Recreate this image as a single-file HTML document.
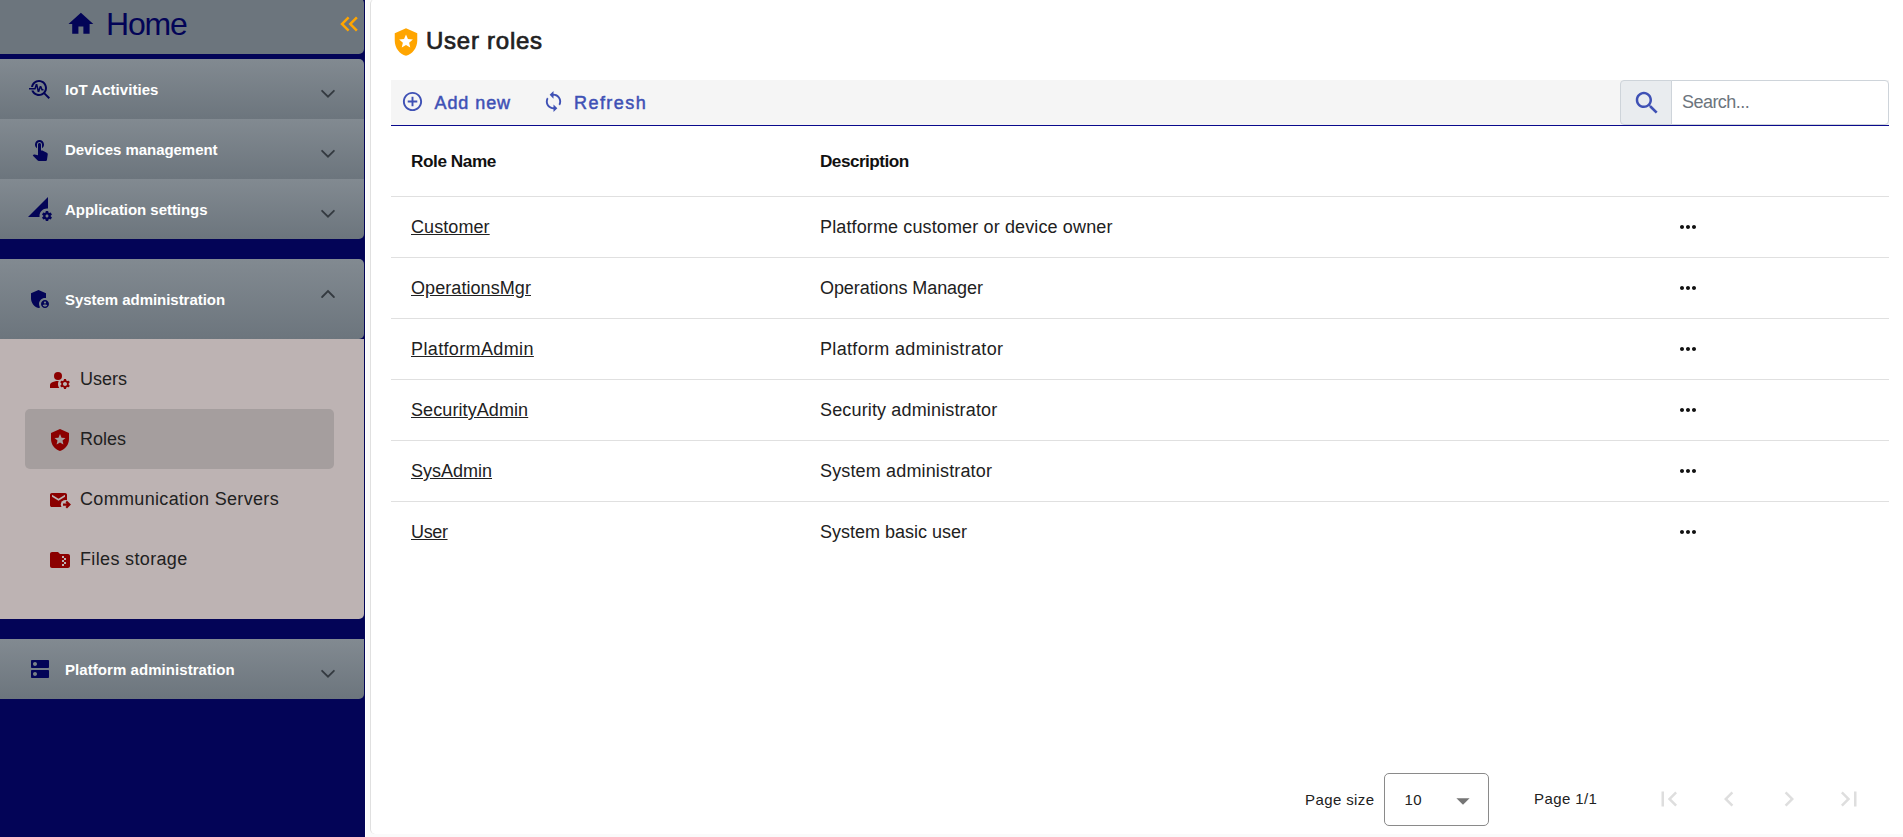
<!DOCTYPE html>
<html>
<head>
<meta charset="utf-8">
<title>User roles</title>
<style>
*{box-sizing:border-box;margin:0;padding:0}
html,body{width:1903px;height:837px;overflow:hidden;background:#fafafa;font-family:"Liberation Sans",sans-serif;color:#212121}
.abs{position:absolute}
#side{position:absolute;left:0;top:0;width:365px;height:837px;background:#030457}
.pan{position:absolute;left:0;width:364px;background:linear-gradient(#828a91,#6c757d);border-radius:0 5px 5px 0}
.pan svg.ic{position:absolute;left:28px;width:24px;height:24px;fill:#030457}
.pan .t{position:absolute;left:65px;color:#fff;font-weight:bold;font-size:15px;white-space:nowrap;line-height:20px}
.pan svg.ch{position:absolute;left:316.350px;width:24px;height:24px;fill:none;stroke:#343a40;stroke-width:1.800;stroke-linecap:round;stroke-linejoin:miter}
#home{top:-2px;height:56px;background:#6c757d}
#body{position:absolute;left:0;top:339px;width:364px;height:280px;background:#bdb3b3;border-radius:0 0 5px 0}
.it{position:absolute;left:25px;width:309px;height:60px;border-radius:5px}
.it svg{position:absolute;left:23px;top:19px;width:24px;height:24px;fill:#8b0000}
.it span{position:absolute;left:55px;top:19px;font-size:18px;line-height:22px;white-space:nowrap;color:#212121}
#card{position:absolute;left:370px;top:-1px;width:1533px;height:834.700px;background:#fff;border-left:1px solid #e0e0e0;border-radius:5px 0 0 5px}
.tx{position:absolute;white-space:nowrap}
.row{position:absolute;left:391px;width:1498px;height:1px;background:#e0e0e0}
.lnk{position:absolute;left:411px;font-size:18px;line-height:22px;text-decoration:underline;color:#212121;white-space:nowrap}
.dsc{position:absolute;left:820px;font-size:18px;line-height:22px;color:#212121;white-space:nowrap}
.dots{position:absolute;left:1676px;width:24px;height:24px;fill:#111}
</style>
</head>
<body>
<div id="side">
  <div class="pan" id="home">
    <svg class="abs" style="left:66.200px;top:11.270px;width:29.800px;height:29.800px;fill:#030457" viewBox="0 0 24 24"><path d="M10 20v-6h4v6h5v-8h3L12 3 2 12h3v8z"/></svg>
    <div class="tx" style="left:106px;top:7px;font-size:32px;line-height:38px;letter-spacing:-1.200px;color:#030457">Home</div>
    <svg class="abs" style="left:334.200px;top:11px;width:30px;height:30px;fill:#ffa500" viewBox="0 0 24 24"><path d="M17.59 18 19 16.59 14.42 12 19 7.41 17.59 6l-6 6z"/><path d="M11 18l1.41-1.41L7.83 12l4.58-4.59L11 6l-6 6z"/></svg>
  </div>

  <div class="pan" style="top:59px;height:60px;border-radius:0 5px 0 0">
    <svg class="ic" style="top:18px" viewBox="0 0 24 24"><path d="M22 20.59l-4.69-4.69C18.370 14.550 19 12.850 19 11c0-4.420-3.580-8-8-8-4.080 0-7.440 3.050-7.930 7h2.020C5.570 7.170 8.030 5 11 5c3.310 0 6 2.690 6 6s-2.690 6-6 6c-2.420 0-4.500-1.440-5.450-3.500H3.400C4.450 16.690 7.460 19 11 19c1.850 0 3.550-.63 4.900-1.690L20.590 22 22 20.590z"/><path d="M8.430 9.690 9.650 15h1.640l1.260-3.780.95 2.280h2V12h-1l-1.250-3h-1.540l-1.120 3.370L9.350 7H7.700l-1.250 4H1v1.500h6.550z"/></svg>
    <div class="t" style="top:21px;letter-spacing:.050px">IoT Activities</div>
    <svg class="ch" style="top:23px" viewBox="0 0 24 24"><path d="M6.100 8.800l5.900 5.900 5.900-5.900"/></svg>
  </div>

  <div class="pan" style="top:119px;height:60px;border-radius:0">
    <svg class="ic" style="top:18px" viewBox="0 0 24 24"><path d="M9 11.240V7.500C9 6.120 10.120 5 11.500 5S14 6.120 14 7.500v3.740c1.210-.81 2-2.180 2-3.740C16 5.010 13.990 3 11.500 3S7 5.010 7 7.500c0 1.560.79 2.930 2 3.740zm9.840 4.630l-4.540-2.260c-.17-.07-.35-.11-.54-.11H13v-6c0-.83-.67-1.500-1.500-1.500S10 6.670 10 7.500v10.740l-3.430-.72c-.08-.01-.15-.03-.24-.03-.31 0-.59.13-.79.33l-.79.8 4.940 4.940c.27.27.65.44 1.060.44h6.790c.75 0 1.330-.55 1.440-1.280l.75-5.270c.01-.07.02-.14.02-.2 0-.62-.38-1.160-.91-1.380z"/></svg>
    <div class="t" style="top:21px;letter-spacing:-.050px">Devices management</div>
    <svg class="ch" style="top:23px" viewBox="0 0 24 24"><path d="M6.100 8.800l5.900 5.900 5.900-5.900"/></svg>
  </div>

  <div class="pan" style="top:179px;height:60px;border-radius:0 0 5px 0">
    <svg class="ic" style="top:18px" viewBox="0 0 24 24"><path d="M18.990 11.500c.34 0 .67.03 1 .07L20 0 0 20h11.560c-.04-.33-.07-.66-.07-1 0-4.140 3.360-7.500 7.500-7.500zm3.710 7.990c.02-.16.04-.32.04-.49 0-.17-.01-.33-.04-.49l1.060-.83c.09-.08.12-.21.06-.32l-1-1.730c-.06-.11-.19-.15-.31-.11l-1.240.5c-.26-.2-.54-.37-.85-.49l-.19-1.320c-.01-.12-.12-.21-.24-.21h-2c-.12 0-.23.09-.25.21l-.19 1.320c-.3.13-.59.29-.85.49l-1.240-.5c-.11-.04-.24 0-.31.11l-1 1.730c-.06.11-.04.24.06.32l1.060.83c-.02.16-.03.32-.03.49 0 .17.010.33.030.49l-1.060.83c-.09.08-.12.21-.06.32l1 1.730c.06.11.19.15.31.11l1.240-.5c.26.2.54.37.85.49l.19 1.320c.02.12.12.21.25.21h2c.12 0 .23-.09.25-.21l.19-1.320c.3-.13.59-.29.84-.49l1.250.5c.11.04.24 0 .31-.11l1-1.730c.06-.11.03-.24-.06-.32l-1.070-.83zm-3.710 1.010c-.83 0-1.500-.67-1.500-1.500s.67-1.500 1.500-1.500 1.500.67 1.500 1.500-.67 1.500-1.500 1.500z"/></svg>
    <div class="t" style="top:21px;letter-spacing:-.040px">Application settings</div>
    <svg class="ch" style="top:23px" viewBox="0 0 24 24"><path d="M6.100 8.800l5.900 5.900 5.900-5.900"/></svg>
  </div>

  <div id="body">
    <div class="it" style="top:10px">
      <svg viewBox="0 0 24 24"><circle cx="10" cy="8" r="4"/><path d="M10.670 13.020c-.22-.01-.44-.02-.67-.02-2.420 0-4.680.67-6.610 1.820-.88.52-1.390 1.500-1.390 2.530V20h9.260c-.79-1.130-1.260-2.510-1.260-4 0-1.070.25-2.070.67-2.980z"/><path d="M20.750 16c0-.22-.03-.42-.06-.63l1.140-1.010-1-1.730-1.450.49c-.32-.27-.68-.48-1.080-.63L18 11h-2l-.3 1.490c-.4.15-.76.36-1.080.63l-1.450-.49-1 1.730 1.140 1.010c-.03.21-.06.41-.06.63s.03.42.06.63l-1.140 1.010 1 1.730 1.450-.49c.32.27.68.48 1.080.63L16 21h2l.3-1.490c.4-.15.76-.36 1.080-.63l1.450.49 1-1.730-1.140-1.010c.03-.21.06-.41.06-.63zM17 18c-1.100 0-2-.9-2-2s.9-2 2-2 2 .9 2 2-.9 2-2 2z"/></svg>
      <span>Users</span>
    </div>
    <div class="it" style="top:70px;background:#a59e9e">
      <svg viewBox="0 0 24 24"><path d="M14.500 12.590l.9 3.880-3.400-2.050-3.400 2.050.9-3.870-3-2.590 3.960-.34L12 6.020l1.540 3.640 3.960.34-3 2.590zM3 5v6c0 5.550 3.840 10.740 9 12 5.160-1.260 9-6.450 9-12V5l-9-4-9 4z"/></svg>
      <span>Roles</span>
    </div>
    <div class="it" style="top:130px">
      <svg viewBox="0 0 24 24"><path fill-rule="evenodd" d="M3.870 5h13.260C18.160 5 19 5.840 19 6.870v10.260C19 18.160 18.160 19 17.130 19H3.870C2.840 19 2 18.160 2 17.130V6.870C2 5.840 2.840 5 3.870 5zM10.500 12.800L4 8.800V6.870l6.500 4 6.500-4V8.800l-6.500 4z"/><circle cx="17.500" cy="16.600" r="4.700" fill="#bdb3b3"/><path d="M19 12.800l-1.500 1.500 1.150 1.150H15v2.300h3.650l-1.150 1.150 1.500 1.500 3.950-3.800z"/></svg>
      <span style="letter-spacing:.330px">Communication Servers</span>
    </div>
    <div class="it" style="top:190px">
      <svg viewBox="0 0 24 24"><path d="M20 6h-8l-2-2H4c-1.100 0-2 .9-2 2v12c0 1.100.9 2 2 2h16c1.100 0 2-.9 2-2V8c0-1.100-.9-2-2-2zm-2 6h-2v2h2v2h-2v2h-2v-2h2v-2h-2v-2h2v-2h-2V8h2v2h2v2z"/></svg>
      <span style="letter-spacing:.350px">Files storage</span>
    </div>
  </div>
  <div class="pan" style="top:259px;height:80px;border-radius:0 5px 5px 0">
    <svg class="ic" style="top:28px" viewBox="0 0 24 24"><path d="M17 11c.34 0 .67.04 1 .09V6.270L10.500 3 3 6.270v4.910c0 4.540 3.200 8.790 7.500 9.820.55-.13 1.080-.32 1.600-.55-.69-.98-1.100-2.170-1.100-3.450 0-3.310 2.690-6 6-6z"/><path d="M17 13c-2.210 0-4 1.790-4 4s1.790 4 4 4 4-1.790 4-4-1.790-4-4-4zm0 1.380c.62 0 1.120.51 1.120 1.120s-.51 1.120-1.120 1.120-1.120-.51-1.120-1.120.5-1.120 1.120-1.120zm0 5.370c-.93 0-1.740-.46-2.240-1.170.05-.72 1.510-1.080 2.240-1.080s2.190.36 2.240 1.080c-.5.710-1.310 1.170-2.240 1.170z"/></svg>
    <div class="t" style="top:31px;letter-spacing:-.040px">System administration</div>
    <svg class="ch" style="top:23px" viewBox="0 0 24 24"><path d="M6.100 15l5.900-5.900 5.900 5.900"/></svg>
  </div>

  <div class="pan" style="top:639px;height:60px;border-radius:0 0 5px 0">
    <svg class="ic" style="top:18px" viewBox="0 0 24 24"><path d="M20 13H4c-.55 0-1 .45-1 1v6c0 .55.45 1 1 1h16c.55 0 1-.45 1-1v-6c0-.55-.45-1-1-1zM7 19c-1.100 0-2-.9-2-2s.9-2 2-2 2 .9 2 2-.9 2-2 2zM20 3H4c-.55 0-1 .45-1 1v6c0 .55.45 1 1 1h16c.55 0 1-.45 1-1V4c0-.55-.45-1-1-1zM7 9c-1.100 0-2-.9-2-2s.9-2 2-2 2 .9 2 2-.9 2-2 2z"/></svg>
    <div class="t" style="top:21px;letter-spacing:.060px">Platform administration</div>
    <svg class="ch" style="top:23px" viewBox="0 0 24 24"><path d="M6.100 8.800l5.900 5.900 5.900-5.900"/></svg>
  </div>
</div>

<div class="abs" style="left:365px;top:0;width:1px;height:837px;background:#fff"></div>
<div id="card"></div>

<!-- title -->
<svg class="abs" style="left:390.700px;top:27px;width:30px;height:30px;fill:#ffa500" viewBox="0 0 24 24"><path d="M14.500 12.590l.9 3.880-3.400-2.050-3.400 2.050.9-3.870-3-2.590 3.960-.34L12 6.020l1.540 3.640 3.960.34-3 2.590zM3 5v6c0 5.550 3.840 10.740 9 12 5.160-1.260 9-6.450 9-12V5l-9-4-9 4z"/></svg>
<div class="tx" style="left:426px;top:26px;font-size:24px;line-height:30px;-webkit-text-stroke:.700px #212121;letter-spacing:.750px;color:#212121">User roles</div>

<!-- toolbar -->
<div class="abs" style="left:391px;top:80px;width:1498px;height:46px;background:#f5f5f5;border-bottom:1px solid #0a0a8c"></div>
<svg class="abs" style="left:401px;top:90px;width:23px;height:23px;fill:#3f51b5" viewBox="0 0 24 24"><path d="M13 7h-2v4H7v2h4v4h2v-4h4v-2h-4V7zm-1-5C6.480 2 2 6.480 2 12s4.480 10 10 10 10-4.480 10-10S17.520 2 12 2zm0 18c-4.410 0-8-3.590-8-8s3.590-8 8-8 8 3.590 8 8-3.590 8-8 8z"/></svg>
<div class="tx" style="left:434.500px;top:92px;font-size:18px;line-height:22px;-webkit-text-stroke:.500px #3f51b5;letter-spacing:.920px;color:#3f51b5">Add new</div>
<svg class="abs" style="left:542px;top:90.200px;width:23px;height:23px;fill:#3f51b5" viewBox="0 0 24 24"><path d="M12 4V1L8 5l4 4V6c3.310 0 6 2.690 6 6 0 1.010-.25 1.970-.7 2.800l1.460 1.460C19.540 15.030 20 13.570 20 12c0-4.420-3.580-8-8-8zm0 14c-3.310 0-6-2.690-6-6 0-1.010.25-1.970.7-2.800L5.240 7.740C4.460 8.970 4 10.430 4 12c0 4.420 3.580 8 8 8v3l4-4-4-4v3z"/></svg>
<div class="tx" style="left:574px;top:92px;font-size:18px;line-height:22px;-webkit-text-stroke:.500px #3f51b5;letter-spacing:1.450px;color:#3f51b5">Refresh</div>

<!-- search -->
<div class="abs" style="left:1620px;top:80px;width:52px;height:45px;background:#e9ecef;border:1px solid #ced4da;border-radius:4px 0 0 4px"></div>
<svg class="abs" style="left:1631.600px;top:88.200px;width:30px;height:30px;fill:#3f51b5" viewBox="0 0 24 24"><path d="M15.500 14h-.79l-.28-.27C15.410 12.590 16 11.110 16 9.500 16 5.910 13.090 3 9.500 3S3 5.910 3 9.500 5.910 16 9.500 16c1.610 0 3.090-.59 4.230-1.570l.27.28v.79l5 4.990L20.490 19l-4.990-5zm-6 0C7.010 14 5 11.990 5 9.500S7.010 5 9.500 5 14 7.010 14 9.500 11.990 14 9.500 14z"/></svg>
<div class="abs" style="left:1671px;top:80px;width:218px;height:45px;background:#fff;border:1px solid #ced4da;border-radius:0 4px 4px 0"></div>
<div class="tx" style="left:1682px;top:91px;font-size:18px;line-height:22px;letter-spacing:-.550px;color:#6c757d">Search...</div>

<!-- table -->
<div class="tx" style="left:411px;top:150px;font-size:17.200px;line-height:22px;font-weight:bold;letter-spacing:-.430px;color:#111">Role Name</div>
<div class="tx" style="left:820px;top:150px;font-size:17.200px;line-height:22px;font-weight:bold;letter-spacing:-.540px;color:#111">Description</div>
<div class="row" style="top:196px"></div>
<div class="row" style="top:257px"></div>
<div class="row" style="top:318px"></div>
<div class="row" style="top:379px"></div>
<div class="row" style="top:440px"></div>
<div class="row" style="top:501px"></div>

<div class="lnk" style="top:216px;letter-spacing:.080px">Customer</div><div class="dsc" style="top:216px;letter-spacing:.130px">Platforme customer or device owner</div>
<div class="lnk" style="top:277px;letter-spacing:.070px">OperationsMgr</div><div class="dsc" style="top:277px;letter-spacing:-.070px">Operations Manager</div>
<div class="lnk" style="top:338px;letter-spacing:.370px">PlatformAdmin</div><div class="dsc" style="top:338px;letter-spacing:.330px">Platform administrator</div>
<div class="lnk" style="top:399px;letter-spacing:.090px">SecurityAdmin</div><div class="dsc" style="top:399px;letter-spacing:.150px">Security administrator</div>
<div class="lnk" style="top:460px">SysAdmin</div><div class="dsc" style="top:460px;letter-spacing:.150px">System administrator</div>
<div class="lnk" style="top:521px;letter-spacing:-.370px">User</div><div class="dsc" style="top:521px">System basic user</div>

<svg class="dots" style="top:215px" viewBox="0 0 24 24"><path d="M6 10c-1.100 0-2 .9-2 2s.9 2 2 2 2-.9 2-2-.9-2-2-2zm12 0c-1.100 0-2 .9-2 2s.9 2 2 2 2-.9 2-2-.9-2-2-2zm-6 0c-1.100 0-2 .9-2 2s.9 2 2 2 2-.9 2-2-.9-2-2-2z"/></svg>
<svg class="dots" style="top:276px" viewBox="0 0 24 24"><path d="M6 10c-1.100 0-2 .9-2 2s.9 2 2 2 2-.9 2-2-.9-2-2-2zm12 0c-1.100 0-2 .9-2 2s.9 2 2 2 2-.9 2-2-.9-2-2-2zm-6 0c-1.100 0-2 .9-2 2s.9 2 2 2 2-.9 2-2-.9-2-2-2z"/></svg>
<svg class="dots" style="top:337px" viewBox="0 0 24 24"><path d="M6 10c-1.100 0-2 .9-2 2s.9 2 2 2 2-.9 2-2-.9-2-2-2zm12 0c-1.100 0-2 .9-2 2s.9 2 2 2 2-.9 2-2-.9-2-2-2zm-6 0c-1.100 0-2 .9-2 2s.9 2 2 2 2-.9 2-2-.9-2-2-2z"/></svg>
<svg class="dots" style="top:398px" viewBox="0 0 24 24"><path d="M6 10c-1.100 0-2 .9-2 2s.9 2 2 2 2-.9 2-2-.9-2-2-2zm12 0c-1.100 0-2 .9-2 2s.9 2 2 2 2-.9 2-2-.9-2-2-2zm-6 0c-1.100 0-2 .9-2 2s.9 2 2 2 2-.9 2-2-.9-2-2-2z"/></svg>
<svg class="dots" style="top:459px" viewBox="0 0 24 24"><path d="M6 10c-1.100 0-2 .9-2 2s.9 2 2 2 2-.9 2-2-.9-2-2-2zm12 0c-1.100 0-2 .9-2 2s.9 2 2 2 2-.9 2-2-.9-2-2-2zm-6 0c-1.100 0-2 .9-2 2s.9 2 2 2 2-.9 2-2-.9-2-2-2z"/></svg>
<svg class="dots" style="top:520px" viewBox="0 0 24 24"><path d="M6 10c-1.100 0-2 .9-2 2s.9 2 2 2 2-.9 2-2-.9-2-2-2zm12 0c-1.100 0-2 .9-2 2s.9 2 2 2 2-.9 2-2-.9-2-2-2zm-6 0c-1.100 0-2 .9-2 2s.9 2 2 2 2-.9 2-2-.9-2-2-2z"/></svg>

<!-- paginator -->
<div class="tx" style="left:1305px;top:790px;font-size:15px;line-height:20px;letter-spacing:.4px;color:#212121">Page size</div>
<div class="abs" style="left:1384px;top:773px;width:105px;height:53px;border:1px solid #8a8a8a;border-radius:5px;background:#fff"></div>
<div class="tx" style="left:1404.500px;top:790px;font-size:15px;line-height:20px;letter-spacing:.4px;color:#212121">10</div>
<svg class="abs" style="left:1450px;top:790px;width:26px;height:20px;fill:#757575" viewBox="0 0 26 20"><path d="M6.400 8.200h13.200L13 14.700z"/></svg>
<div class="tx" style="left:1534px;top:789px;font-size:15px;line-height:20px;letter-spacing:.4px;color:#212121">Page 1/1</div>
<svg class="abs" style="left:1653.8px;top:784px;width:30px;height:30px;fill:#dedede" viewBox="0 0 24 24"><path d="M18.410 16.590 13.820 12l4.590-4.590L17 6l-6 6 6 6zM6 6h2v12H6z"/></svg>
<svg class="abs" style="left:1713.8px;top:784px;width:30px;height:30px;fill:#dedede" viewBox="0 0 24 24"><path d="M15.410 7.410 14 6l-6 6 6 6 1.410-1.410L10.830 12z"/></svg>
<svg class="abs" style="left:1773.8px;top:784px;width:30px;height:30px;fill:#dedede" viewBox="0 0 24 24"><path d="M10 6 8.590 7.410 13.170 12l-4.580 4.590L10 18l6-6z"/></svg>
<svg class="abs" style="left:1833.8px;top:784px;width:30px;height:30px;fill:#dedede" viewBox="0 0 24 24"><path d="M5.590 7.410 10.180 12l-4.590 4.590L7 18l6-6-6-6zM16 6h2v12h-2z"/></svg>
</body>
</html>
